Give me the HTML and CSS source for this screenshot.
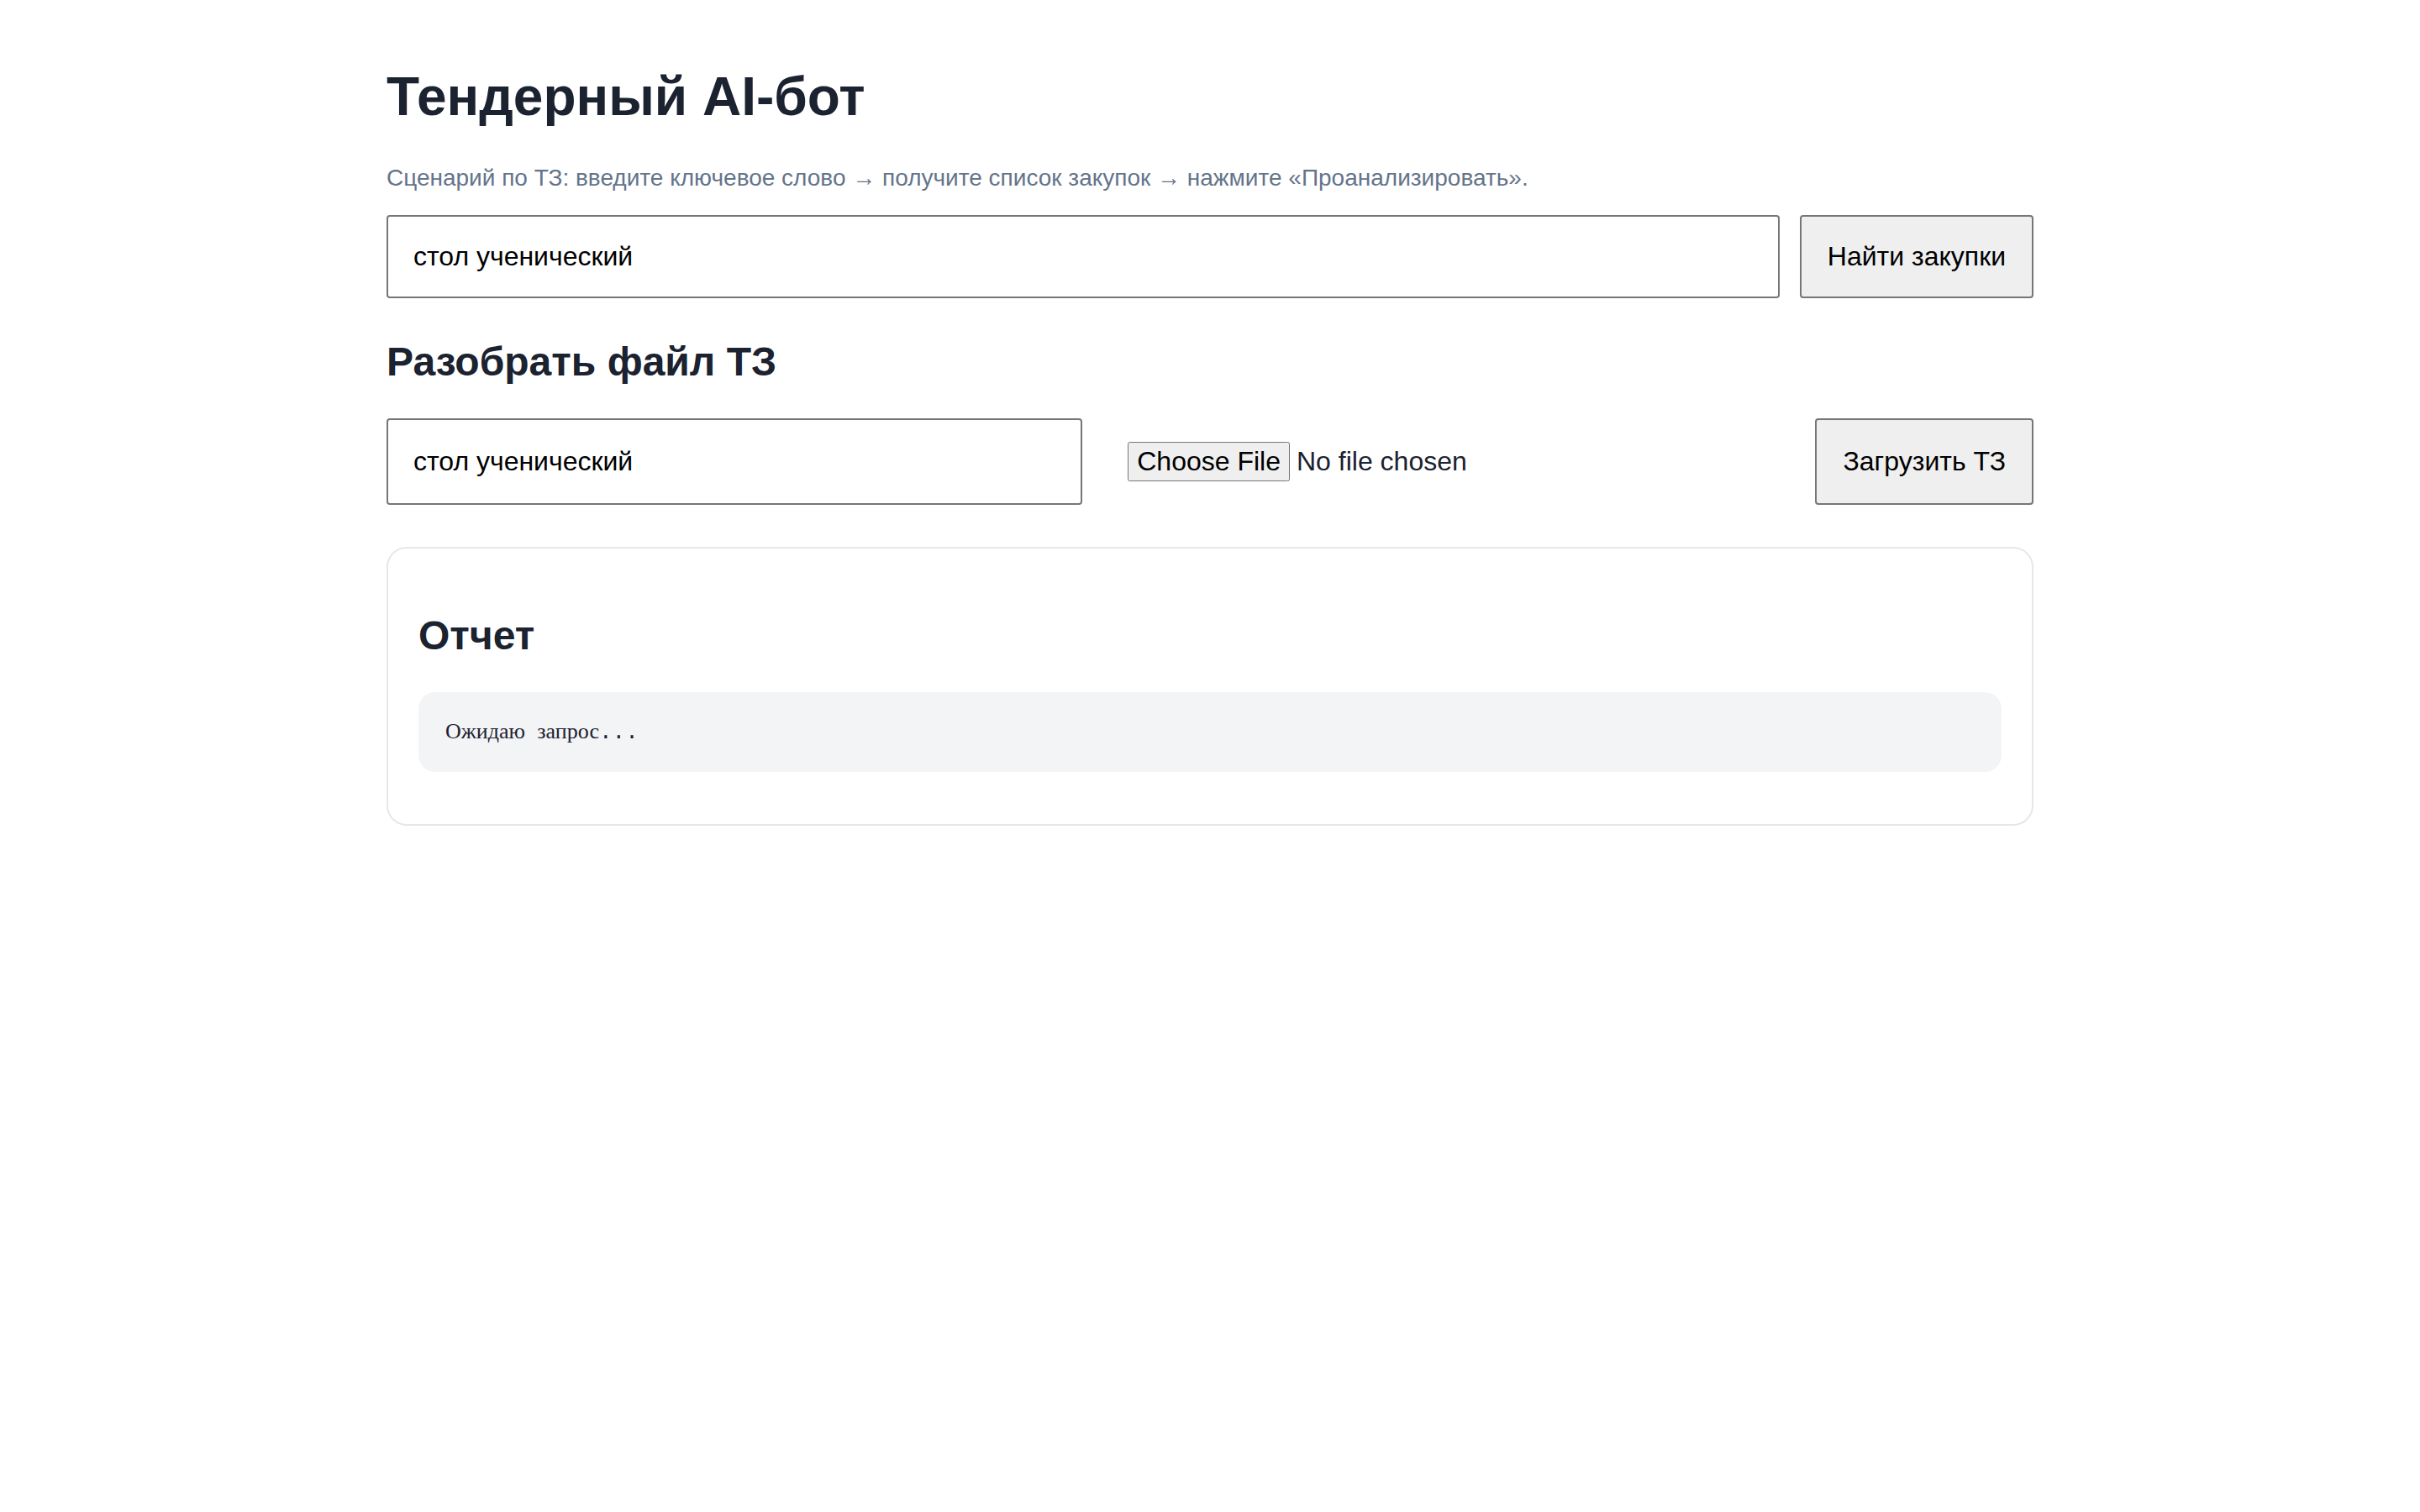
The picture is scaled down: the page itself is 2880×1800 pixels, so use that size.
FILE: index.html
```html
<!DOCTYPE html>
<html lang="ru">
<head>
    <meta charset="UTF-8">
    <meta name="viewport" content="width=device-width, initial-scale=1.0">
    <title>Тендерный AI-бот</title>
    <link rel="stylesheet" href="styles.css">
</head>
<body>
    <div class="container">
        <h1>Тендерный AI-бот</h1>
        <p class="hint">Сценарий по ТЗ: введите ключевое слово → получите список закупок → нажмите «Проанализировать».</p>

        <div class="search-row">
            <input type="text" id="keyword" value="стол ученический">
            <button id="searchBtn">Найти закупки</button>
        </div>

        <h2>Разобрать файл ТЗ</h2>
        <div class="upload-row">
            <input type="text" id="fileKeyword" value="стол ученический">
            <input type="file" id="tzFile" class="file-input">
            <button id="uploadBtn">Загрузить ТЗ</button>
        </div>

        <div class="report">
            <h2>Отчет</h2>
            <pre id="output">Ожидаю запрос<span class="dots">...</span></pre>
        </div>
    </div>
</body>
</html>
```

FILE: styles.css
```css
body {
    margin: 0;
    font-family: "Liberation Sans", Arial, sans-serif;
    color: #1b2230;
    background: #fff;
}

.container {
    max-width: 1960px;
    margin: 0 auto;
    padding: 78px 0 60px;
}

h1 {
    font-size: 64px;
    margin: 0 0 44px;
    color: #1b2230;
}

h2 {
    font-size: 48px;
    margin: 40px 0;
    color: #1b2230;
}

.hint {
    font-size: 28px;
    color: #64748b;
    margin: 0 0 28px;
}

input,
button {
    font: inherit;
    font-size: 32px;
}

input[type="text"] {
    padding: 29px 30px;
    border: 2px solid #767676;
    border-radius: 4px;
    color: #000;
    min-width: 0;
}

button {
    padding: 29px 31px;
    border: 2px solid #767676;
    border-radius: 4px;
    background: #efefef;
    color: #000;
    cursor: pointer;
}

.search-row {
    display: flex;
    gap: 24px;
    margin-bottom: 48px;
}

.search-row input {
    flex: 1;
}

.upload-row {
    display: grid;
    grid-template-columns: 1fr 1fr auto;
    gap: 22px;
}

.file-input {
    padding: 28px 30px 28px 32px;
    border: none;
    color: #1b2230;
}

.file-input::file-selector-button {
    font: inherit;
    padding: 3px 9px;
    margin-right: 8px;
}

.report {
    margin-top: 50px;
    border: 2px solid #e5e7eb;
    border-radius: 24px;
    padding: 36px;
}

.report h2 {
    margin: 40px 0;
}

pre {
    background: #f3f4f6;
    border-radius: 20px;
    padding: 32px;
    margin: 26px 0;
    font-family: "Liberation Serif", serif;
    font-size: 26px;
    word-spacing: 8px;
    color: #1b2230;
}

.dots {
    font-family: "Liberation Mono", monospace;
}
```
